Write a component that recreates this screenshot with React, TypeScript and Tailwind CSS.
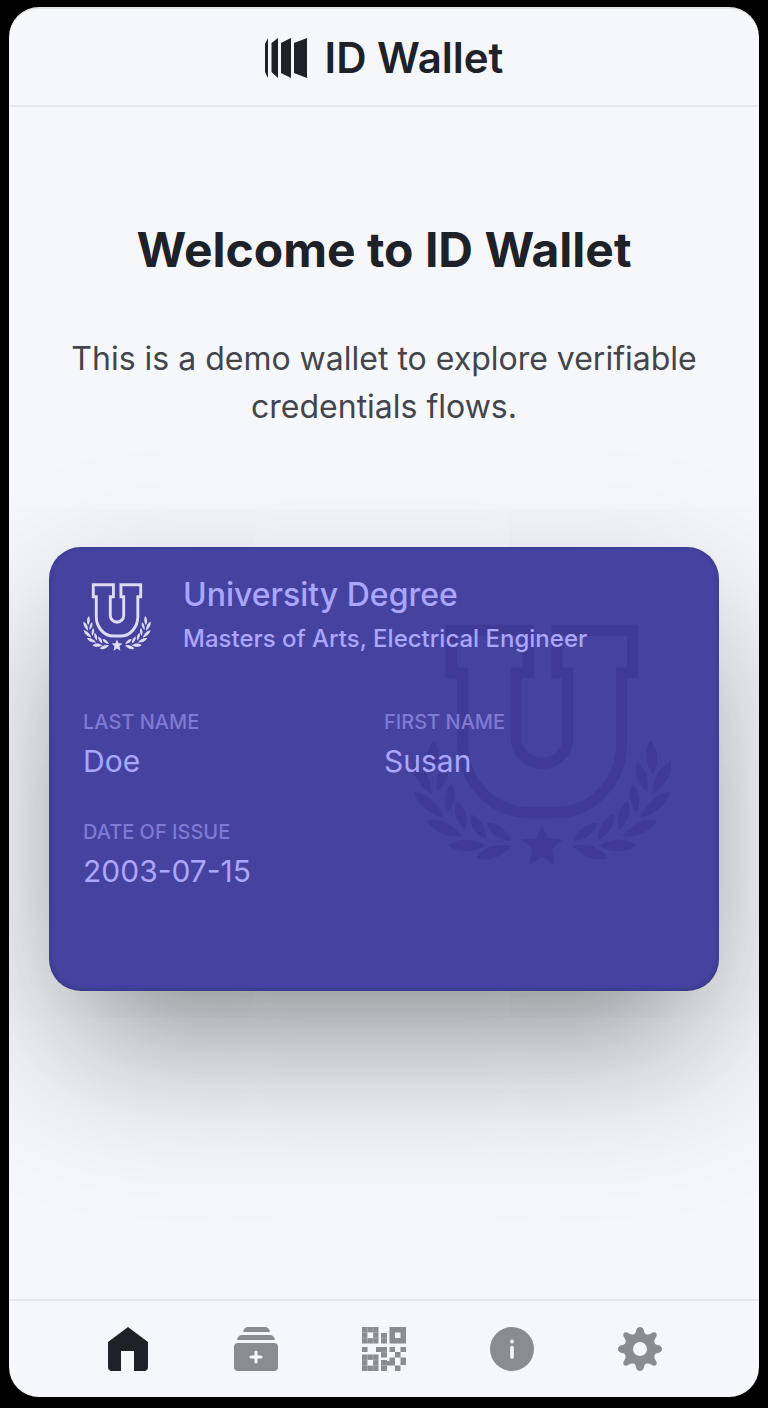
import { useState } from "react";

type Tab = "home" | "add" | "scan" | "info" | "settings";

type Leaf = [number, number, number, number, number];

// x1, y1, x2, y2, width of each leaf on the right branch
const leaves: Leaf[] = [
  [750, 423, 758, 524, 22],
  [711, 491, 740, 574, 19],
  [811, 486, 757, 582, 22],
  [697, 553, 709, 638, 19],
  [809, 576, 721, 653, 22],
  [682, 604, 657, 689, 20],
  [771, 662, 666, 708, 22],
  [640, 643, 594, 719, 20],
  [707, 736, 596, 737, 23],
  [592, 669, 519, 723, 20],
  [623, 774, 518, 738, 23],
];

const leafPath = ([x1, y1, x2, y2, w]: Leaf) => {
  const dx = x2 - x1;
  const dy = y2 - y1;
  const len = Math.hypot(dx, dy);
  const nx = (-dy / len) * w;
  const ny = (dx / len) * w;
  const at = (t: number, s: number) => `${x1 + dx * t + nx * s} ${y1 + dy * t + ny * s}`;
  return `M${x1} ${y1}C${at(0.25, 1)} ${at(0.65, 1)} ${x2} ${y2}C${at(0.65, -1)} ${at(0.25, -1)} ${x1} ${y1}Z`;
};

function Crest({ className }: { className: string }) {
  return (
    <svg viewBox="35 72 780 726" preserveAspectRatio="none" className={className} aria-hidden="true">
      <path
        d="M153 91H384V219H348V418A77 72 0 0 0 502 418V219H470V91H697V219H664V430C664 545 575 638 465 638H386C276 638 187 545 187 430V219H153Z"
        fill="none"
        stroke="currentColor"
        strokeWidth="33"
      />
      <path
        d="M425 676L443 715L487 719L454 747L464 794L425 770L386 794L396 747L363 719L407 715Z"
        fill="currentColor"
      />
      <g fill="currentColor">
        {leaves.map((leaf, i) => (
          <path key={i} d={leafPath(leaf)} />
        ))}
      </g>
      <g fill="currentColor" transform="translate(851 0) scale(-1 1)">
        {leaves.map((leaf, i) => (
          <path key={i} d={leafPath(leaf)} />
        ))}
      </g>
    </svg>
  );
}

function Logo() {
  return (
    <svg viewBox="0 0 42 40" className="h-10 w-[42px]" fill="currentColor" aria-hidden="true">
      <path d="M0 6L3 0V40L0 34Z" />
      <path d="M6.500 5L13 0V40L6.500 34Z" />
      <path d="M16 5L26 0V40L16 35Z" />
      <path d="M29 5L42 0V40L29 35Z" />
    </svg>
  );
}

const icons: Record<Tab, React.ReactNode> = {
  home: <path d="M22 0L42 15V40Q42 44 38 44H28V24H15V44H6Q2 44 2 40V15Z" />,
  add: (
    <>
      <path d="M9 5Q10 0 14 0H31Q35 0 36 5Z" />
      <path d="M3 13Q4 8 8 8H36Q40 8 41 13Z" />
      <path
        fillRule="evenodd"
        d="M4 16H40Q44 16 44 20V40Q44 44 40 44H4Q0 44 0 40V20Q0 16 4 16ZM22 23.500Q20.500 23.500 20.500 25V28.500H17Q15.500 28.500 15.500 30T17 31.500H20.500V35Q20.500 36.500 22 36.500T23.500 35V31.500H27Q28.500 31.500 28.500 30T27 28.500H23.500V25Q23.500 23.500 22 23.500Z"
      />
    </>
  ),
  scan: (
    <>
      <path
        fillRule="evenodd"
        d="M0 0H16.500V16.500H0ZM5.500 5.500V11H11V5.500ZM27.500 0H44V16.500H27.500ZM33 5.500V11H38.500V5.500ZM0 27.500H16.500V44H0ZM5.500 33V38.500H11V33Z"
      />
      <path d="M19 6H25V16.500H19ZM0 20H5.500V25H0ZM14 20H25V30.500H19V25H14ZM27.500 20H33V25H27.500ZM38.500 20H44V25H38.500ZM33 25H38.500V30.500H33ZM27.500 30.500H33V38.500H25V44H19V33H25V34H27.500ZM38.500 30.500H44V38H38.500ZM33 38.500H38.500V44H33Z" />
      <path
        d="M5.500 0V16.500M11 0V16.500M0 5.500H16.500M0 11H16.500M5.500 27.500V44M11 27.500V44M0 33H16.500M0 38.500H16.500M19 11H25M19 25H25M19 38.500H25"
        stroke="#f5f7fb"
        strokeWidth="0.500"
        opacity="0.500"
      />
    </>
  ),
  info: (
    <>
      <circle cx="22" cy="22" r="22" />
      <circle cx="22" cy="14.500" r="1.900" fill="#f5f7fb" />
      <path d="M22 20.500V30" stroke="#f5f7fb" strokeWidth="3.600" strokeLinecap="round" />
    </>
  ),
  settings: (
    <path
      fillRule="evenodd"
      d="M22 0C24 0 25.500 1.500 26 4C26.400 6.200 27 7 28.500 7.400C30 7.800 31.300 7.600 33 6.500C35 5.100 37 4.800 38.100 5.900S38.900 9 37.500 11C36.400 12.700 36.200 14 36.600 15.500C37 17 37.800 17.600 40 18C42.500 18.500 44 20 44 22S42.500 25.500 40 26C37.800 26.400 37 27 36.600 28.500C36.200 30 36.400 31.300 37.500 33C38.900 35 39.200 37 38.100 38.100S35 38.900 33 37.500C31.300 36.400 30 36.200 28.500 36.600C27 37 26.400 37.800 26 40C25.500 42.500 24 44 22 44S18.500 42.500 18 40C17.600 37.800 17 37 15.500 36.600C14 36.200 12.700 36.400 11 37.500C9 38.900 7 39.200 5.900 38.100S5.100 35 6.500 33C7.600 31.300 7.800 30 7.400 28.500C7 27 6.200 26.400 4 26C1.500 25.500 0 24 0 22S1.500 18.500 4 18C6.200 17.600 7 17 7.400 15.500C7.800 14 7.600 12.700 6.500 11C5.100 9 4.800 7 5.900 5.900S9 5.100 11 6.500C12.700 7.600 14 7.800 15.500 7.400C17 7 17.600 6.200 18 4C18.500 1.500 20 0 22 0ZM22 15A7 7 0 1 0 22 29A7 7 0 1 0 22 15Z"
    />
  ),
};

const tabs: { id: Tab; label: string }[] = [
  { id: "home", label: "Home" },
  { id: "add", label: "Add credential" },
  { id: "scan", label: "Scan" },
  { id: "info", label: "Info" },
  { id: "settings", label: "Settings" },
];

const fields = [
  { label: "LAST NAME", value: "Doe" },
  { label: "FIRST NAME", value: "Susan" },
  { label: "DATE OF ISSUE", value: "2003-07-15" },
];

export default function App() {
  const [active, setActive] = useState<Tab>("home");

  return (
    <div className="min-h-screen bg-black px-[9px] pt-[7px] pb-[11px] font-['Inter',sans-serif] flex flex-col">
      <div className="flex grow flex-col overflow-hidden rounded-[30px] border-t-2 border-[#e2e2e0] bg-[#f5f7fb]">
        {/* Header */}
        <header className="flex items-center justify-center gap-[18px] border-b-2 border-[#e5e7eb] pt-[23px] pb-[21px] text-[#1e2128]">
          <Logo />
          <span className="text-[42px] leading-[52px] font-semibold">ID Wallet</span>
        </header>

        <main className="flex grow flex-col px-10 pt-[115px] text-center">
          <h1 className="text-5xl leading-[56px] font-bold text-[#1e2128]">Welcome to ID Wallet</h1>
          <p className="mt-[57px] text-[32px] leading-12 text-[#43454b]">
            This is a demo wallet to explore verifiable credentials flows.
          </p>

          {/* Credential card */}
          <section className="relative mt-[116px] min-h-[444px] rounded-[32px] bg-[#4642a0] px-[34px] pt-7 text-left text-[#aba6ff] shadow-[0_64px_160px_0_rgba(0,0,0,0.27),0_60px_120px_-60px_rgba(0,0,0,0.3),inset_0_-1px_5px_0_rgba(10,37,64,0.35)]">
            <Crest className="absolute top-[77px] right-[47px] h-[242px] w-[260px] text-[#3f3a95]" />
            <div className="relative flex items-start gap-8">
              <Crest className="mt-2 size-[68px] shrink-0 text-[#dddcf2]" />
              <div>
                <h2 className="text-[32px] leading-10 font-medium">University Degree</h2>
                <p className="mt-1 text-2xl leading-10 font-medium">Masters of Arts, Electrical Engineer</p>
              </div>
            </div>
            <dl className="relative mt-[47px] grid grid-cols-2 gap-y-8">
              {fields.map((field) => (
                <div key={field.label}>
                  <dt className="text-xl leading-8 font-medium text-[#7f7ad3]">{field.label}</dt>
                  <dd className="text-3xl leading-[46px]">{field.value}</dd>
                </div>
              ))}
            </dl>
          </section>
        </main>

        {/* Bottom navigation */}
        <nav className="flex items-center justify-around border-t-2 border-[#e5e7eb] px-[55px] py-[26px]">
          {tabs.map((tab) => (
            <button
              key={tab.id}
              aria-label={tab.label}
              onClick={() => setActive(tab.id)}
              className={`cursor-pointer ${active === tab.id ? "text-[#1e2128]" : "text-[#8b8c91]"}`}
            >
              <svg viewBox="0 0 44 44" className="size-11" fill="currentColor" aria-hidden="true">
                {icons[tab.id]}
              </svg>
            </button>
          ))}
        </nav>
      </div>
    </div>
  );
}
